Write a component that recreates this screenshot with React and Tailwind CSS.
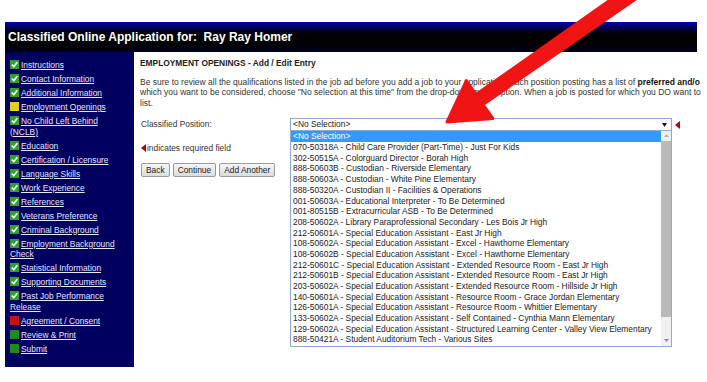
import React from 'react';

const navItems = [
  { label: 'Instructions', status: 'done' },
  { label: 'Contact Information', status: 'done' },
  { label: 'Additional Information', status: 'done' },
  { label: 'Employment Openings', status: 'current' },
  { label: 'No Child Left Behind (NCLB)', status: 'done' },
  { label: 'Education', status: 'done' },
  { label: 'Certification / Licensure', status: 'done' },
  { label: 'Language Skills', status: 'done' },
  { label: 'Work Experience', status: 'done' },
  { label: 'References', status: 'done' },
  { label: 'Veterans Preference', status: 'done' },
  { label: 'Criminal Background', status: 'done' },
  { label: 'Employment Background Check', status: 'done' },
  { label: 'Statistical Information', status: 'done' },
  { label: 'Supporting Documents', status: 'done' },
  { label: 'Past Job Performance Release', status: 'done' },
  { label: 'Agreement / Consent', status: 'missing' },
  { label: 'Review & Print', status: 'open' },
  { label: 'Submit', status: 'open' },
];

const positions = [
  '070-50318A - Child Care Provider (Part-Time) - Just For Kids',
  '302-50515A - Colorguard Director - Borah High',
  '888-50603B - Custodian - Riverside Elementary',
  '888-50603A - Custodian - White Pine Elementary',
  '888-50320A - Custodian II - Facilities & Operations',
  '001-50603A - Educational Interpreter - To Be Determined',
  '001-80515B - Extracurricular ASB - To Be Determined',
  '208-50602A - Library Paraprofessional Secondary - Les Bois Jr High',
  '212-50601A - Special Education Assistant - East Jr High',
  '108-50602A - Special Education Assistant - Excel - Hawthorne Elementary',
  '108-50602B - Special Education Assistant - Excel - Hawthorne Elementary',
  '212-50601C - Special Education Assistant - Extended Resource Room - East Jr High',
  '212-50601B - Special Education Assistant - Extended Resource Room - East Jr High',
  '203-50602A - Special Education Assistant - Extended Resource Room - Hillside Jr High',
  '140-50601A - Special Education Assistant - Resource Room - Grace Jordan Elementary',
  '126-50601A - Special Education Assistant - Resource Room - Whittier Elementary',
  '133-50602A - Special Education Assistant - Self Contained - Cynthia Mann Elementary',
  '129-50602A - Special Education Assistant - Structured Learning Center - Valley View Elementary',
  '888-50421A - Student Auditorium Tech - Various Sites',
];

const StatusIcon = ({ status }) => {
  if (status === 'done') {
    return (
      <svg width="9" height="9" viewBox="0 0 9 9" className="inline-block align-[-1px] mr-[2px]">
        <rect width="9" height="9" fill="#2fa12f" />
        <path d="M1.8 4.6 L3.8 6.6 L7.4 2.2" stroke="#fff" strokeWidth="1.6" fill="none" />
      </svg>
    );
  }
  const fill = status === 'current' ? '#e4cf12' : status === 'missing' ? '#c81010' : '#1f8a1f';
  return (
    <svg width="9" height="9" viewBox="0 0 9 9" className="inline-block align-[-1px] mr-[2px]">
      <rect width="9" height="9" fill={fill} />
    </svg>
  );
};

const RequiredMark = () => (
  <svg width="5" height="8" viewBox="0 0 5 8" className="inline-block">
    <polygon points="5,0 5,8 0,4" fill="#b80000" />
  </svg>
);

const Button = ({ children }) => (
  <button className="h-[14px] px-[4px] border border-[#9a9a9a] rounded-[2px] bg-gradient-to-b from-[#f6f6f6] to-[#dcdcdc] text-[8.4px] leading-[12px] text-[#222]">
    {children}
  </button>
);

export default function App() {
  return (
    <div className="relative w-[707px] h-[382px] bg-white overflow-hidden font-['Liberation_Sans',Arial,sans-serif]">
      <div className="h-[22px]" />

      <div className="ml-[5px] w-[692px] h-[30px] flex items-center pl-[3px] bg-gradient-to-b from-[#0000b4] via-[#000000] via-45% to-[#00001c]">
        <h1 className="text-white font-bold text-[12px] leading-none">
          Classified Online Application for:&nbsp; Ray Ray Homer
        </h1>
      </div>

      <div className="flex">
        <nav className="ml-[5px] w-[129px] h-[315px] shrink-0 bg-[#00005f] pt-[8px] pl-[5px]">
          <div className="w-[112px] flex flex-col gap-[3.5px]">
            {navItems.map((item) => (
              <div key={item.label} className="text-[8.4px] leading-[10.5px] text-[#e6e6ff]">
                <StatusIcon status={item.status} />
                <span className="underline">{item.label}</span>
              </div>
            ))}
          </div>
        </nav>

        <main className="w-[567px] shrink-0 overflow-hidden pl-[6px] pt-[6px] text-[#333] text-[8.4px] leading-[10.5px]">
          <h2 className="font-bold text-[#222]">EMPLOYMENT OPENINGS - Add / Edit Entry</h2>

          <div className="mt-[8.5px] text-[8.5px] leading-[10.3px] whitespace-nowrap">
            <p>
              Be sure to review all the qualifications listed in the job ad before you add a job to your application. Each position posting has a list of <b className="text-[#111]">preferred and/o</b>
            </p>
            <p>
              which you want to be considered, choose "No selection at this time" from the drop-down menu option. When a job is posted for which you DO want to
            </p>
            <p>list.</p>
          </div>

          <div className="mt-[10.5px] flex">
            <div className="w-[150px] shrink-0 pl-[1px]">
              <div className="h-[12.5px] flex items-center">Classified Position:</div>
              <div className="mt-[12px] flex items-center gap-[1px]">
                <RequiredMark />
                <span>indicates required field</span>
              </div>
              <div className="mt-[9.5px] flex gap-[3px]">
                <Button>Back</Button>
                <Button>Continue</Button>
                <Button>Add Another</Button>
              </div>
            </div>

            <div className="flex items-start gap-[3px]">
              <div className="w-[382px]">
                <div className="h-[12.5px] border border-[#8fa8d4] flex items-center justify-between pl-[2px] pr-[4px] text-[#222]">
                  <span>&lt;No Selection&gt;</span>
                  <svg width="5" height="4" viewBox="0 0 5 4">
                    <polygon points="0,0 5,0 2.5,4" fill="#111" />
                  </svg>
                </div>
                <div className="h-[216px] border border-t-0 border-[#8fa8d4] flex">
                  <ul className="flex-1 pt-[0.5px] text-[#222]">
                    <li className="h-[10.7px] leading-[10.7px] pl-[2px] bg-[#3399ff] text-white">&lt;No Selection&gt;</li>
                    {positions.map((p) => (
                      <li key={p} className="h-[10.7px] leading-[10.7px] pl-[2px] whitespace-nowrap">{p}</li>
                    ))}
                  </ul>
                  <div className="w-[10px] bg-[#f0f0f0] flex flex-col">
                    <div className="h-[10px] flex items-center justify-center">
                      <svg width="5" height="3" viewBox="0 0 5 3">
                        <polygon points="0,3 5,3 2.5,0" fill="#b0b0b0" />
                      </svg>
                    </div>
                    <div className="h-[176px] bg-[#b9b9b9]" />
                    <div className="flex-1" />
                    <div className="h-[10px] flex items-center justify-center">
                      <svg width="5" height="3" viewBox="0 0 5 3">
                        <polygon points="0,0 5,0 2.5,3" fill="#8a8a8a" />
                      </svg>
                    </div>
                  </div>
                </div>
              </div>
              <div className="h-[12.5px] flex items-center">
                <RequiredMark />
              </div>
            </div>
          </div>
        </main>
      </div>

      <svg className="absolute left-0 top-0 pointer-events-none" width="707" height="382" viewBox="0 0 707 382">
        <polygon
          points="640,-4 483,104.5 492.8,118.4 447,122 466.4,80.6 476,94.6 630,-14"
          fill="#f01414"
          stroke="#f01414"
          strokeWidth="3"
          strokeLinejoin="round"
        />
      </svg>
    </div>
  );
}
